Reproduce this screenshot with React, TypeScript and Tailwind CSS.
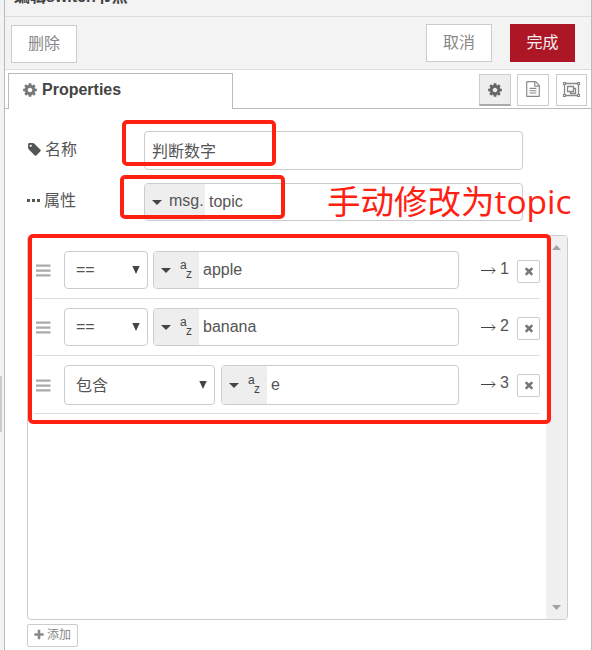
import React from "react";

const PATHS = {
  gear: "M1152 896q0-106-75-181t-181-75-181 75-75 181 75 181 181 75 181-75 75-181zm512-109v222q0 12-8 23t-20 13l-185 28q-19 54-39 91 35 50 107 138 10 12 10 25t-9 23q-27 37-99 108t-94 71q-12 0-26-9l-138-108q-44 23-91 38-16 136-29 186-7 28-36 28h-222q-14 0-24.500-8.500t-11.500-21.500l-28-184q-49-16-90-37l-141 107q-10 9-25 9-14 0-25-11-126-114-165-168-7-10-7-23 0-12 8-23 15-21 51-66.500t54-70.500q-27-50-41-99l-183-27q-13-2-21-12.500t-8-23.500v-222q0-12 8-23t19-13l186-28q14-46 39-92-40-57-107-138-10-12-10-24 0-10 9-23 26-36 98.500-107.500t94.500-71.500q13 0 26 10l138 107q44-23 91-38 16-136 29-186 7-28 36-28h222q14 0 24.500 8.500t11.500 21.500l28 184q49 16 90 37l142-107q9-9 24-9 13 0 25 10 129 119 165 170 7 8 7 22 0 12-8 23-15 21-51 66.500t-54 70.500q26 50 41 98l183 28q13 2 21 12.500t8 23.500z",
  file: "M1596 380q28 28 48 76t20 88v1152q0 40-28 68t-68 28h-1344q-40 0-68-28t-28-68v-1600q0-40 28-68t68-28h896q40 0 88 20t76 48zm-444-244v376h376q-10-29-22-41l-313-313q-12-12-41-22zm384 1528v-1024h-416q-40 0-68-28t-28-68v-416h-768v1536h1280zm-1024-864q0-14 9-23t23-9h704q14 0 23 9t9 23v64q0 14-9 23t-23 9h-704q-14 0-23-9t-9-23v-64zm736 224q14 0 23 9t9 23v64q0 14-9 23t-23 9h-704q-14 0-23-9t-9-23v-64q0-14 9-23t23-9h704zm0 256q14 0 23 9t9 23v64q0 14-9 23t-23 9h-704q-14 0-23-9t-9-23v-64q0-14 9-23t23-9h704z",
  plus: "M1600 736v192q0 40-28 68t-68 28h-416v416q0 40-28 68t-68 28h-192q-40 0-68-28t-28-68v-416h-416q-40 0-68-28t-28-68v-192q0-40 28-68t68-28h416v-416q0-40 28-68t68-28h192q40 0 68 28t28 68v416h416q40 0 68 28t28 68z",
  tag: "M576 448q0-53-37.500-90.500t-90.500-37.500-90.500 37.500-37.500 90.500 37.500 90.500 90.500 37.500 90.500-37.500 37.500-90.500zm1067 576q0 53-37 90l-491 492q-39 37-91 37-53 0-90-37l-715-716q-38-37-64.500-101t-26.500-117v-416q0-52 38-90t90-38h416q53 0 117 26.500t102 64.500l715 714q37 39 37 91z",
  times: "M1490 1322q0 40-28 68l-136 136q-28 28-68 28t-68-28l-294-294-294 294q-28 28-68 28t-68-28l-136-136q-28-28-28-68t28-68l294-294-294-294q-28-28-28-68t28-68l136-136q28-28 68-28t68 28l294 294 294-294q28-28 68-28t68 28l136 136q28 28 28 68t-28 68l-294 294 294 294q28 28 28 68z",
};

function Icon({ name, className }: { name: keyof typeof PATHS; className: string }) {
  return (
    <svg viewBox="0 0 1792 1792" fill="currentColor" className={`shrink-0 ${className}`}>
      <path d={PATHS[name]} />
    </svg>
  );
}

function ObjectGroup() {
  return (
    <svg viewBox="0 0 19 17" className="h-[17px] w-[19px]" fill="none" stroke="currentColor">
      <path d="M4 2.500h11M4 14.500h11M2.500 4v9M16.500 4v9" strokeWidth="1.300" />
      <path d="M1.500 1.500h2v2h-2zM15.500 1.500h2v2h-2zM1.500 13.500h2v2h-2zM15.500 13.500h2v2h-2z" strokeWidth="1.200" />
      <path d="M5.500 5.500h6v5h-6zM11.500 7.500h2v5h-5v-2" strokeWidth="1.300" />
    </svg>
  );
}

function Caret() {
  return (
    <svg viewBox="0 0 10 5" className="h-[5px] w-[10px] shrink-0" fill="#444">
      <path d="M0 0h10L5 5z" />
    </svg>
  );
}

function Grip() {
  return (
    <svg viewBox="0 0 15 13" className="mr-[13px] ml-[2px] h-[13px] w-[15px] shrink-0" fill="#aaa">
      <path d="M0 .5h14.500v2.300H0zM0 5.400h14.500v2.300H0zM0 10.200h14.500v2.300H0z" />
    </svg>
  );
}

interface RuleProps {
  op: string;
  value: string;
  index: number;
  wide?: boolean;
}

function Rule({ op, value, index, wide }: RuleProps) {
  return (
    <div className={`flex border-b border-[#ddd] pt-[9px] ${wide ? "h-[58px]" : "h-[57px]"}`}>
      <div className={`flex items-center ${wide ? "h-[40px]" : "h-[38px]"}`}>
        <Grip />
        <div className={`flex h-full items-center justify-between rounded-[4px] border border-[#ccc] pl-[11px] ${wide ? "w-[151px] pr-[7px]" : "w-[84px] pr-[7px]"}`}>
          <span className={wide ? "pt-px" : ""}>{op}</span>
          <svg viewBox="0 0 8 8" className="h-2 w-2" fill="#444"><path d="M.3 0h7.400L4 8z" /></svg>
        </div>
        <div className={`flex h-full items-stretch overflow-hidden rounded-[4px] border border-[#ccc] ${wide ? "ml-[6px] w-[238px]" : "ml-[5px] w-[306px]"}`}>
          <div className="flex w-[45px] items-center bg-[#eee] pl-[7px]">
            <Caret />
            <span className="ml-[9px] h-[18px] text-[12px] leading-[12px] text-[#444]">
              <span className="block h-[9px] leading-[9px]">a</span>
              <span className="block pl-[6px] leading-[9px]">z</span>
            </span>
          </div>
          <span className="flex items-center pl-1">{value}</span>
        </div>
      </div>
      <div className="ml-[22px] flex h-[35px] w-[36px] items-center">
        <svg viewBox="0 0 15 7" className="mt-[3px] mr-[4px] h-[7px] w-[15px]" fill="none" stroke="#444">
          <path d="M0 3.500h14M11 .5l3 3-3 3" />
        </svg>
        <span>{index}</span>
      </div>
      <div className="mt-[9px] flex h-[23px] w-[23px] items-center justify-center rounded-[2px] border border-[#ccc] pb-px text-[#777]">
        <Icon name="times" className="size-[12px]" />
      </div>
    </div>
  );
}

function Mark({ className }: { className: string }) {
  return <div className={`pointer-events-none absolute rounded-[5px] border-4 border-[#ff2012] ${className}`} />;
}

export default function App() {
  return (
    <div className="relative flex h-[650px] w-[592px] overflow-hidden bg-white font-['Liberation_Sans','Noto_Sans_CJK_SC',sans-serif] text-[16px] leading-5 text-[#555]">
      <div className="flex w-[5px] shrink-0 flex-col border-r border-[#bbb] bg-[#f3f3f3] pt-[376px]">
        <div className="h-[56px] w-[2px] bg-[#ccc]" />
      </div>
      <div className="flex w-[587px] flex-col border-r border-[#bbb]">
        <div className="h-[17px] shrink-0 overflow-hidden border-b border-[#ddd] bg-[#f3f3f3] pl-[9px]">
          <div className="-mt-[13px] font-bold text-[#444]">编辑switch节点</div>
        </div>
        <div className="flex h-[53px] shrink-0 items-start border-b border-[#ddd] bg-[#f3f3f3] pt-[7px] pl-[6px] text-[#888]">
          <button className="mt-px h-[38px] w-[66px] border border-[#ccc] bg-white">删除</button>
          <button className="ml-[349px] h-[38px] w-[66px] border border-[#ccc] bg-white">取消</button>
          <button className="ml-[18px] h-[38px] w-[65px] bg-[#ad1625] text-[#eee]">完成</button>
        </div>
        <div className="flex h-[39px] shrink-0">
          <div className="w-[3px] border-b border-[#bbb]" />
          <div className="mt-[3px] flex w-[225px] items-center border border-b-0 border-[#bbb] pb-[3px] pl-[13px] font-bold text-[#444]">
            <Icon name="gear" className="mr-[4px] size-[16px] text-[#777]" />
            Properties
          </div>
          <div className="flex flex-1 items-start border-b border-[#bbb] pt-1 pl-[246px] text-[#888]">
            <div className="flex h-8 w-8 items-center justify-center border border-b-2 border-[#ccc] border-b-[#aaa] bg-[#eee] text-[#666]">
              <Icon name="gear" className="size-[16px]" />
            </div>
            <div className="ml-[6px] flex h-8 w-8 items-center justify-center border border-[#ccc] pb-[2px]">
              <Icon name="file" className="size-[16px]" />
            </div>
            <div className="ml-[7px] flex h-8 w-[31px] items-center justify-center border border-[#ccc] pb-[2px]">
              <ObjectGroup />
            </div>
          </div>
        </div>
        <div className="flex flex-col pl-[22px]">
          <div className="mt-[22px] flex h-[39px]">
            <div className="flex h-[37px] w-[117px] items-center">
              <Icon name="tag" className="mr-[3px] size-[15px]" />
              名称
            </div>
            <div className="flex w-[379px] items-center rounded-[4px] border border-[#ccc] pt-[2px] pl-[7px]">判断数字</div>
          </div>
          <div className="mt-[13px] flex h-[38px]">
            <div className="flex h-[35px] w-[117px] items-center">
              <div className="mr-[4px] flex gap-[2px]">
                <i className="size-[3px] bg-[#555]" />
                <i className="size-[3px] bg-[#555]" />
                <i className="size-[3px] bg-[#555]" />
              </div>
              属性
            </div>
            <div className="flex w-[379px] overflow-hidden rounded-[4px] border border-[#ccc]">
              <div className="flex w-[60px] items-center bg-[#eee] pl-[7px]">
                <Caret />
                <span className="ml-[7px] pb-[2px]">msg.</span>
              </div>
              <span className="flex items-center pl-[4px]">topic</span>
            </div>
          </div>
          <div className="mt-[14px] flex h-[385px] w-[541px] overflow-hidden rounded-[4px] border border-[#ccc]">
            <div className="w-[518px] pt-[6px] pr-[6px] pl-[6px]">
              <Rule op="==" value="apple" index={1} />
              <Rule op="==" value="banana" index={2} />
              <Rule op="包含" value="e" index={3} wide />
            </div>
            <div className="flex flex-1 flex-col items-center justify-between bg-[#f0f0f0] pt-[9px] pb-[9px]">
              <svg viewBox="0 0 9 5" className="h-[5px] w-[9px]" fill="#a3a3a3"><path d="M4.500 0L9 5H0z" /></svg>
              <svg viewBox="0 0 9 5" className="h-[5px] w-[9px]" fill="#a3a3a3"><path d="M0 0h9L4.500 5z" /></svg>
            </div>
          </div>
          <button className="mt-[4px] flex h-[23px] w-[51px] items-center rounded-[2px] border border-[#ccc] pb-px pl-[5px] text-[12px] text-[#888]">
            <Icon name="plus" className="mr-[2px] size-[12px]" />
            添加
          </button>
        </div>
      </div>
      <Mark className="top-[120px] left-[122px] h-[46px] w-[154px]" />
      <Mark className="top-[175px] left-[120px] h-[44px] w-[165px]" />
      <Mark className="top-[234px] left-[28px] h-[190px] w-[523px]" />
      <div className="absolute top-[181px] left-[327px] font-['Open_Sans','Noto_Sans_CJK_SC',sans-serif] text-[33.500px] leading-[40px] whitespace-nowrap text-[#ff2012]">
        手动修改为topic
      </div>
    </div>
  );
}
